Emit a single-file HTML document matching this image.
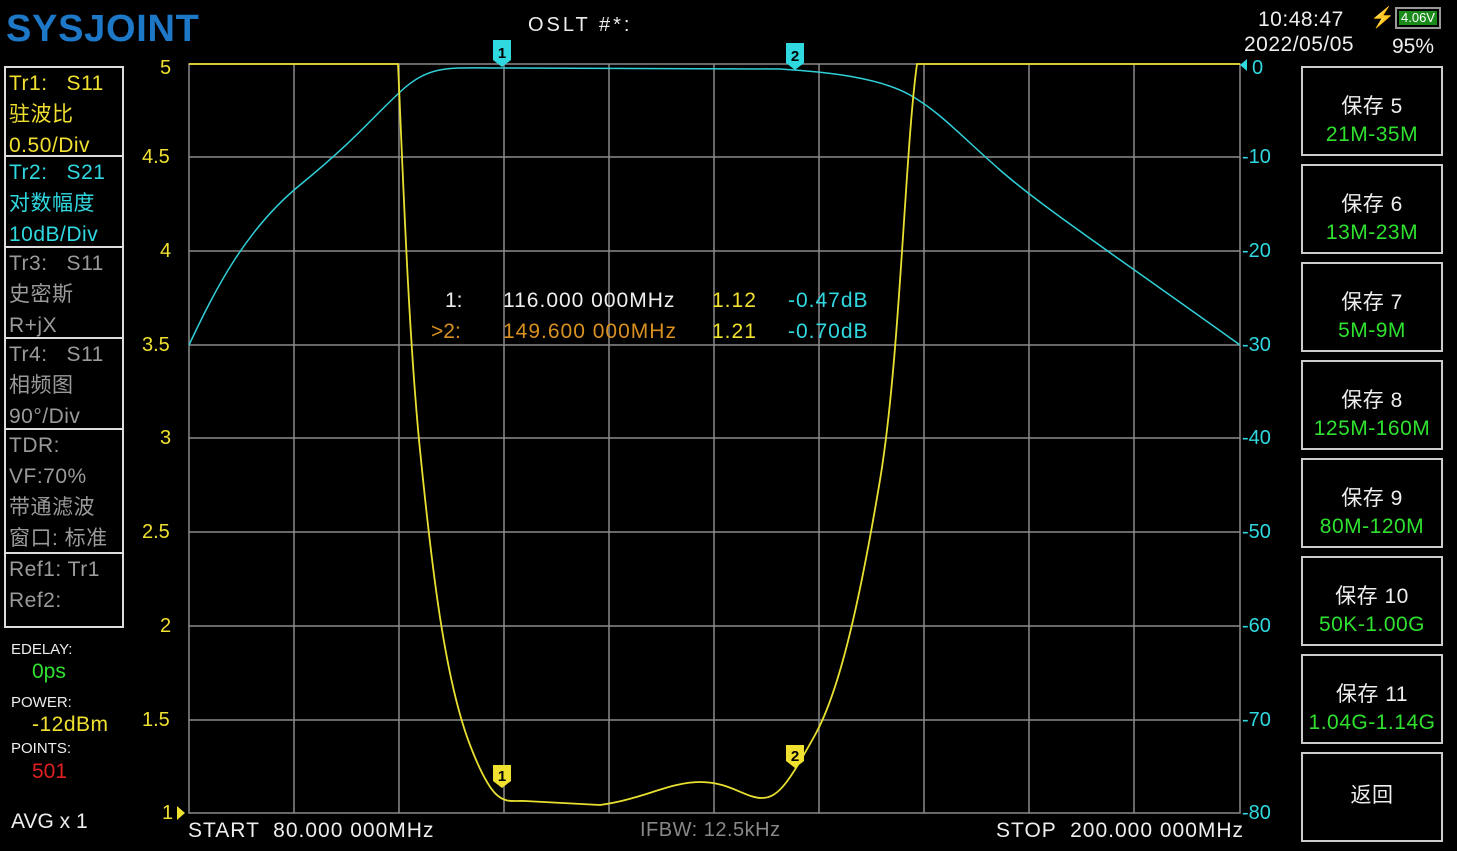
<!DOCTYPE html>
<html><head><meta charset="utf-8"><style>
body{margin:0;width:1457px;height:851px;background:#000;overflow:hidden;font-family:"Liberation Sans","Noto Sans CJK SC",sans-serif;position:relative}
.a{position:absolute;white-space:nowrap}
.box{position:absolute;left:4px;width:120px;border:2px solid #ddd;box-sizing:border-box}
.box div{font-size:21px;line-height:31px;padding-left:3px;letter-spacing:0.5px}
.btn{position:absolute;left:1301px;width:142px;height:90px;border:2px solid #ccc;box-sizing:border-box;text-align:center;color:#eee;font-size:21px;letter-spacing:0.5px}
.btn .t{margin-top:26px;line-height:26px}
.btn .s{color:#2fe02f;line-height:30px}
.y{color:#f0e030}.c{color:#30d8e0}.g{color:#9a9a9a}.w{color:#eee}
.m{letter-spacing:1px}
</style></head><body>
<div class="a" style="left:6px;top:8px;font-size:38px;font-weight:bold;color:#1e78c8;letter-spacing:0.7px">SYSJOINT</div>
<div class="a w" style="left:528px;top:14px;font-size:20px;letter-spacing:3px">OSLT #*:</div>
<div class="a w" style="left:1258px;top:8px;font-size:21px;letter-spacing:0.5px">10:48:47</div>
<div class="a" style="left:1370px;top:5px;font-size:20px;color:#f0c020">⚡</div>
<div class="a" style="left:1395px;top:7px;width:46px;height:22px;border:2px solid #999;box-sizing:border-box;background:#000"><div style="position:absolute;left:2px;top:2px;right:2px;bottom:2px;background:#1a8a1a;color:#fff;font-size:13px;line-height:14px;text-align:center">4.06V</div></div>
<div class="a w" style="left:1244px;top:33px;font-size:21px;letter-spacing:0.5px">2022/05/05</div>
<div class="a w" style="left:1392px;top:35px;font-size:21px">95%</div>

<div class="box" style="top:66px;height:91px"><div class="y">Tr1: &nbsp;&nbsp;S11</div><div class="y">驻波比</div><div class="y">0.50/Div</div></div>
<div class="box" style="top:155px;height:93px"><div class="c">Tr2: &nbsp;&nbsp;S21</div><div class="c">对数幅度</div><div class="c">10dB/Div</div></div>
<div class="box" style="top:246px;height:93px"><div class="g">Tr3: &nbsp;&nbsp;S11</div><div class="g">史密斯</div><div class="g">R+jX</div></div>
<div class="box" style="top:337px;height:93px"><div class="g">Tr4: &nbsp;&nbsp;S11</div><div class="g">相频图</div><div class="g">90°/Div</div></div>
<div class="box" style="top:428px;height:126px"><div class="g">TDR:</div><div class="g">VF:70%</div><div class="g">带通滤波</div><div class="g">窗口: 标准</div></div>
<div class="box" style="top:552px;height:76px"><div class="g">Ref1: Tr1</div><div class="g">Ref2:</div></div>

<div class="a w" style="left:11px;top:641px;font-size:15px">EDELAY:</div>
<div class="a" style="left:32px;top:660px;font-size:21px;color:#30e030">0ps</div>
<div class="a w" style="left:11px;top:694px;font-size:15px">POWER:</div>
<div class="a y" style="left:32px;top:713px;font-size:21px;letter-spacing:0.5px">-12dBm</div>
<div class="a w" style="left:11px;top:740px;font-size:15px">POINTS:</div>
<div class="a" style="left:32px;top:760px;font-size:21px;color:#e02020">501</div>
<div class="a w" style="left:11px;top:810px;font-size:21px">AVG x 1</div>

<div class="a y" style="left:160px;top:57px;font-size:20px">5</div>
<div class="a y" style="left:142px;top:146px;font-size:20px">4.5</div>
<div class="a y" style="left:160px;top:240px;font-size:20px">4</div>
<div class="a y" style="left:142px;top:334px;font-size:20px">3.5</div>
<div class="a y" style="left:160px;top:427px;font-size:20px">3</div>
<div class="a y" style="left:142px;top:521px;font-size:20px">2.5</div>
<div class="a y" style="left:160px;top:615px;font-size:20px">2</div>
<div class="a y" style="left:142px;top:709px;font-size:20px">1.5</div>
<div class="a y" style="left:162px;top:802px;font-size:20px">1</div>

<div class="a c" style="left:1252px;top:57px;font-size:20px">0</div>
<div class="a c" style="left:1242px;top:146px;font-size:20px">-10</div>
<div class="a c" style="left:1242px;top:240px;font-size:20px">-20</div>
<div class="a c" style="left:1242px;top:334px;font-size:20px">-30</div>
<div class="a c" style="left:1242px;top:427px;font-size:20px">-40</div>
<div class="a c" style="left:1242px;top:521px;font-size:20px">-50</div>
<div class="a c" style="left:1242px;top:615px;font-size:20px">-60</div>
<div class="a c" style="left:1242px;top:709px;font-size:20px">-70</div>
<div class="a c" style="left:1242px;top:802px;font-size:20px">-80</div>

<svg class="a" style="left:0;top:0" width="1457" height="851">
<g stroke="#8a8a8a" stroke-width="1.5" fill="none">
<rect x="189" y="64" width="1051" height="749"/>
<path d="M294 64V813M399 64V813M504 64V813M609 64V813M714 64V813M819 64V813M924 64V813M1029 64V813M1134 64V813M189 157H1240M189 251H1240M189 345H1240M189 438H1240M189 532H1240M189 626H1240M189 720H1240"/>
</g>
<polygon points="177,806 185,813 177,820" fill="#f0e030"/>
<polygon points="1247,59 1240,65 1247,71" fill="#30d8e0"/>
<path fill="none" stroke="#30d0d8" stroke-width="1.5" d="M189 345C215 290 245 230 300 185S370 120 400 92S450 68 500 68L780 69C830 72 880 78 910 95S960 135 1000 170S1100 245 1240 345"/>
<path fill="none" stroke="#e8e030" stroke-width="1.8" d="M189 64H398C402 150 408 330 420 450S445 680 470 745S505 800 525 801L600 805C640 800 670 782 700 782S745 798 762 798S790 780 815 735S860 600 880 480S905 150 917 64H1240"/>
<g font-family="Liberation Sans" font-weight="bold" font-size="15" text-anchor="middle">
<path d="M493 40h18v20l-9 7-9-7z" fill="#30d8e0"/><text x="502" y="58" fill="#000">1</text>
<path d="M786 43h18v20l-9 7-9-7z" fill="#30d8e0"/><text x="795" y="61" fill="#000">2</text>
<path d="M493 765h18v16l-9 7-9-7z" fill="#f0e030"/><text x="502" y="781" fill="#000">1</text>
<path d="M786 745h18v16l-9 7-9-7z" fill="#f0e030"/><text x="795" y="761" fill="#000">2</text>
</g>
</svg>

<div class="a w" style="left:445px;top:289px;font-size:21px">1:</div>
<div class="a w m" style="left:503px;top:289px;font-size:21px">116.000 000MHz</div>
<div class="a y m" style="left:712px;top:289px;font-size:21px">1.12</div>
<div class="a c m" style="left:788px;top:289px;font-size:21px">-0.47dB</div>
<div class="a" style="left:431px;top:320px;font-size:21px;color:#d89020">&gt;2:</div>
<div class="a m" style="left:503px;top:320px;font-size:21px;color:#d89020">149.600 000MHz</div>
<div class="a y m" style="left:712px;top:320px;font-size:21px">1.21</div>
<div class="a c m" style="left:788px;top:320px;font-size:21px">-0.70dB</div>

<div class="a w m" style="left:188px;top:819px;font-size:21px">START &nbsp;80.000 000MHz</div>
<div class="a" style="left:640px;top:819px;font-size:20px;color:#888;letter-spacing:0.5px">IFBW: 12.5kHz</div>
<div class="a w m" style="left:996px;top:819px;font-size:21px">STOP &nbsp;200.000 000MHz</div>

<div class="btn" style="top:66px"><div class="t">保存 5</div><div class="s">21M-35M</div></div>
<div class="btn" style="top:164px"><div class="t">保存 6</div><div class="s">13M-23M</div></div>
<div class="btn" style="top:262px"><div class="t">保存 7</div><div class="s">5M-9M</div></div>
<div class="btn" style="top:360px"><div class="t">保存 8</div><div class="s">125M-160M</div></div>
<div class="btn" style="top:458px"><div class="t">保存 9</div><div class="s">80M-120M</div></div>
<div class="btn" style="top:556px"><div class="t">保存 10</div><div class="s">50K-1.00G</div></div>
<div class="btn" style="top:654px"><div class="t">保存 11</div><div class="s">1.04G-1.14G</div></div>
<div class="btn" style="top:752px"><div class="t" style="margin-top:29px">返回</div></div>
</body></html>
